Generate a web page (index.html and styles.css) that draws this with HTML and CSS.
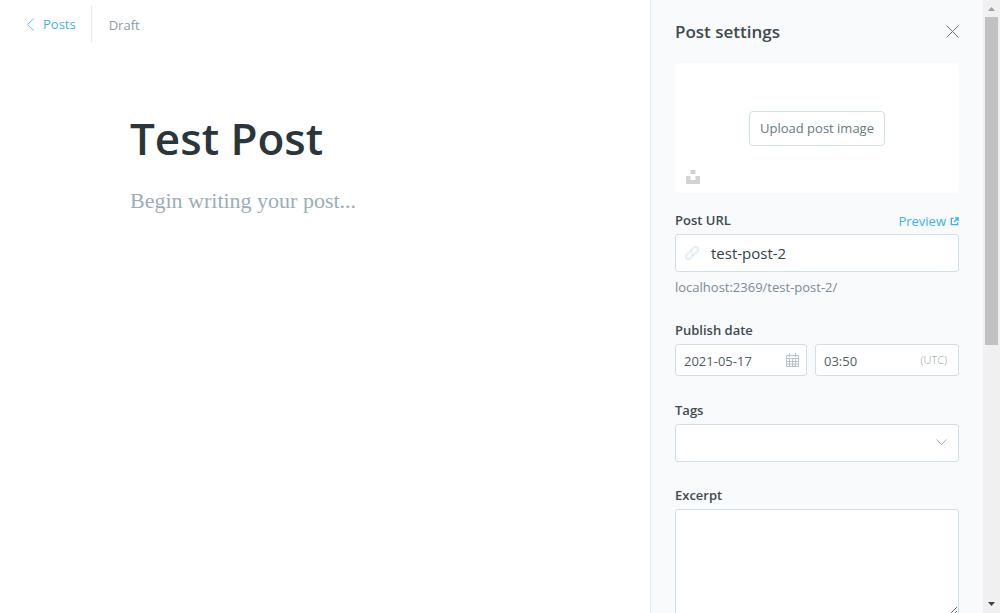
FILE: index.html
```html
<!DOCTYPE html>
<html lang="en">
<head>
<meta charset="utf-8">
<meta name="viewport" content="width=device-width, initial-scale=1">
<title>Test Post</title>
<link rel="stylesheet" href="styles.css">
</head>
<body>
<div class="app">
  <main class="editor">
    <header class="toolbar">
      <a class="back" href="#posts">
        <svg class="back-icon" viewBox="0 0 8 13" aria-hidden="true"><path d="M7.300.5 1 6.500l6.300 6"/></svg>
        Posts
      </a>
      <span class="status">Draft</span>
    </header>
    <div class="document">
      <h1 class="title">Test Post</h1>
      <p class="placeholder">Begin writing your post...</p>
    </div>
  </main>

  <aside class="settings">
    <div class="settings-body">
      <header class="settings-header">
        <h2 class="settings-title">Post settings</h2>
        <button class="close" type="button" aria-label="Close">
          <svg viewBox="0 0 13 13" aria-hidden="true"><path d="M.5.500l12 12m0-12-12 12"/></svg>
        </button>
      </header>

      <div class="uploader">
        <button class="upload" type="button">Upload post image</button>
        <button class="unsplash" type="button" aria-label="Unsplash">
          <svg viewBox="0 0 14 14" aria-hidden="true"><path d="M4.500 0h5v4h-5zM0 6h4.500v4h5V6H14v8H0z"/></svg>
        </button>
      </div>

      <form class="form">
        <div class="group">
          <div class="label-row">
            <label class="label" for="url">Post URL</label>
            <a class="preview" href="#preview">Preview
              <svg viewBox="0 0 10 10" aria-hidden="true"><path d="M4 1.500H1.500v7h7V6M5.500 1H9v3.500M9 1 4.500 5.500"/></svg>
            </a>
          </div>
          <div class="field">
            <svg class="link-icon" viewBox="0 0 14 14" aria-hidden="true"><path d="m6.300 5.100 2.800-2.900a1.900 1.900 0 0 1 2.700 2.700L9 7.700a1.900 1.900 0 0 1-2.700 0M7.700 8.900l-2.800 2.900a1.900 1.900 0 0 1-2.700-2.700L5 6.300a1.900 1.900 0 0 1 2.700 0"/><path d="m5.500 3.900 2.600-2.700a3.300 3.300 0 0 1 4.700 4.700L9.900 8.700a3.300 3.300 0 0 1-3.400.6M8.500 10.100l-2.600 2.700a3.300 3.300 0 0 1-4.700-4.700l2.900-2.800a3.300 3.300 0 0 1 3.400-.6"/></svg>
            <input class="input input-url" id="url" type="text" value="test-post-2">
          </div>
          <p class="help">localhost:2369/test-post-2/</p>
        </div>

        <div class="group group-date">
          <label class="label" for="date">Publish date</label>
          <div class="date-row">
            <div class="field">
              <input class="input input-small" id="date" type="text" value="2021-05-17">
              <svg class="calendar-icon" viewBox="0 0 13 14" aria-hidden="true"><path d="M.5 2.500h12v11H.5zM.5 5.500h12M.5 8.500h12M.5 11h12M3.500 5v8M6.500 5v8M9.500 5v8M3.500 0v4M9.500 0v4"/></svg>
            </div>
            <div class="field">
              <input class="input input-small" type="text" value="03:50" aria-label="Publish time">
              <small class="zone">(UTC)</small>
            </div>
          </div>
        </div>

        <div class="group">
          <label class="label" for="tags">Tags</label>
          <div class="field">
            <select class="input input-tags" id="tags"><option></option></select>
            <svg class="chevron" viewBox="0 0 11 7" aria-hidden="true"><path d="m.5.500 5 5 5-5"/></svg>
          </div>
        </div>

        <div class="group">
          <label class="label" for="excerpt">Excerpt</label>
          <textarea class="input input-excerpt" id="excerpt"></textarea>
        </div>
      </form>
    </div>

    <div class="scrollbar" aria-hidden="true">
      <svg class="arrow arrow-up" viewBox="0 0 17 17"><path d="M5 11h7L8.500 7z"/></svg>
      <div class="track"><div class="thumb"></div></div>
      <svg class="arrow arrow-down" viewBox="0 0 17 17"><path d="M5 6h7l-3.500 4z"/></svg>
    </div>
  </aside>
</div>
</body>
</html>
```
FILE: styles.css
```css
*, *::before, *::after {
  box-sizing: border-box;
}

body {
  margin: 0;
  font-family: "Open Sans", "Noto Sans", sans-serif;
  font-size: 13px;
  line-height: 20px;
  color: #3e4a50;
  background: #fff;
}

h1, h2, p {
  margin: 0;
}

a {
  color: #3eb0ef;
  text-decoration: none;
}

button, input, select, textarea {
  font: inherit;
}

svg {
  display: block;
  flex: none;
  fill: none;
  stroke: currentColor;
}

.app {
  display: flex;
  height: 100vh;
  overflow: hidden;
}

.editor {
  flex: 1;
  min-width: 0;
}

.toolbar {
  display: flex;
  align-items: center;
  padding: 6px 26px;
}

.back {
  display: flex;
  align-items: center;
  gap: 8px;
  height: 36px;
  padding-right: 15px;
  border-right: 1px solid #dfe9f0;
}

.back-icon {
  width: 9px;
  height: 13px;
  stroke: #6cc3f3;
}

.status {
  padding: 2px 0 0 17px;
  color: #8b9ba3;
}

.document {
  padding: 64px 130px;
}

.title {
  font-size: 44px;
  font-weight: 600;
  line-height: 52px;
  color: #2b363b;
}

.placeholder {
  margin-top: 22px;
  font-family: Georgia, "Liberation Serif", serif;
  font-size: 22px;
  line-height: 30px;
  color: #9baeb8;
}

.settings {
  display: flex;
  width: 350px;
  border-left: 1px solid #dfebf5;
  background: #f8fafc;
}

.settings-body {
  flex: 1;
  min-width: 0;
  padding: 20px 24px;
}

.settings-header {
  display: flex;
  align-items: flex-start;
  justify-content: space-between;
  height: 24px;
}

.settings-title {
  font-size: 17px;
  font-weight: 600;
  line-height: 24px;
}

.close {
  padding: 5px 0;
  border: 0;
  background: none;
  color: #67747a;
}

.close svg {
  width: 13px;
  height: 13px;
}

.uploader {
  position: relative;
  display: flex;
  align-items: center;
  justify-content: center;
  height: 130px;
  margin: 19px 0 18px;
  border-radius: 4px;
  background: #fff;
}

.upload {
  height: 35px;
  padding: 0 10px;
  border: 1px solid #d3e0e6;
  border-radius: 4px;
  background: #fff;
  color: #667980;
}

.unsplash {
  position: absolute;
  bottom: 9px;
  left: 11px;
  padding: 0;
  border: 0;
  background: none;
  color: #d3d3d3;
}

.unsplash svg {
  width: 14px;
  height: 14px;
  fill: currentColor;
  stroke: none;
}

.form {
  display: flex;
  flex-direction: column;
  gap: 24px;
}

.group-date {
  padding-bottom: 1px;
}

.label-row {
  display: flex;
  justify-content: space-between;
}

.label {
  display: block;
  margin-bottom: 4px;
  font-weight: 600;
  line-height: 19px;
}

.preview {
  display: flex;
  align-items: center;
  gap: 4px;
  height: 20px;
}

.preview svg {
  width: 9px;
  height: 9px;
  stroke-width: 1.5;
}

.field {
  position: relative;
}

.input {
  display: block;
  width: 100%;
  border: 1px solid #d0e0e9;
  border-radius: 3px;
  outline: 0;
  background: #fff;
  color: #343f44;
}

.input-url {
  height: 38px;
  padding: 0 10px 0 35px;
  font-size: 15px;
}

.input-small {
  height: 32px;
  padding: 2px 8px 0;
  color: #505d63;
}

.input-tags {
  height: 38px;
  appearance: none;
}

.input-excerpt {
  height: 107px;
  padding: 8px;
  resize: vertical;
}

.link-icon {
  position: absolute;
  top: 12px;
  left: 10px;
  width: 14px;
  height: 14px;
  color: #c9dce6;
  stroke-width: 0.7;
}

.help {
  margin-top: 5px;
  color: #7c8b93;
}

.date-row {
  display: grid;
  grid-template-columns: 11fr 12fr;
  gap: 8px;
}

.calendar-icon {
  position: absolute;
  top: 9px;
  right: 8px;
  width: 13px;
  height: 14px;
  color: #b7c3c9;
}

.zone {
  position: absolute;
  top: 6px;
  right: 12px;
  font-size: 11px;
  font-weight: 300;
  color: #8f9fa7;
}

.chevron {
  position: absolute;
  top: 15px;
  right: 12px;
  width: 11px;
  height: 7px;
  color: #9fb1bc;
  pointer-events: none;
}

.scrollbar {
  display: flex;
  flex-direction: column;
  width: 17px;
  background: #f0f0f0;
}

.arrow {
  width: 17px;
  height: 17px;
  stroke: none;
}

.arrow-up {
  fill: #a0a0a0;
}

.arrow-down {
  fill: #404040;
}

.track {
  flex: 1;
  padding: 0 2px;
}

.thumb {
  height: calc(100% * 17 / 30);
  background: #c1c1c1;
}
```
